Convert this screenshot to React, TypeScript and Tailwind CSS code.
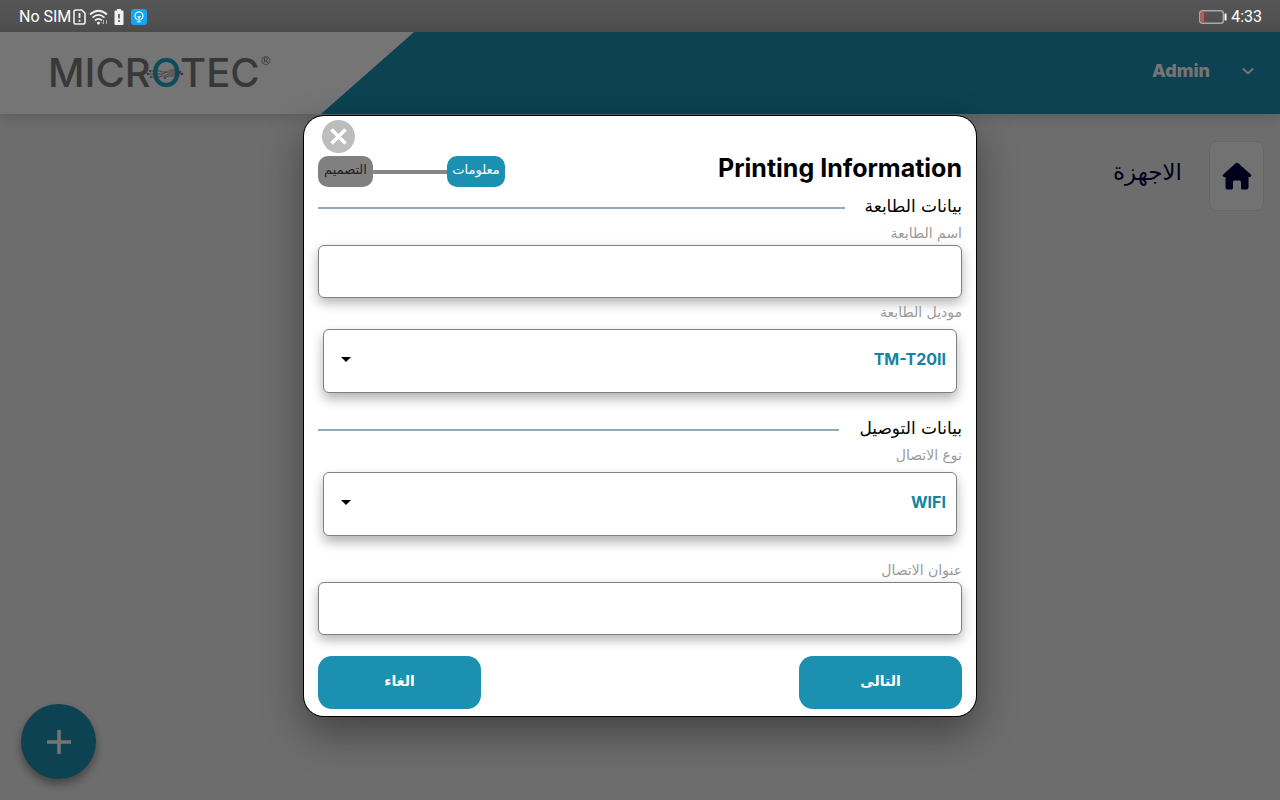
import React, { useState } from 'react';

const AdminMenu = () => (
  <button type="button" className="flex items-center gap-8 text-white">
    <span className="font-['Inter',sans-serif] text-lg font-extrabold">Admin</span>
    <svg width="12" height="8" viewBox="0 0 12 8" fill="none" stroke="currentColor" strokeWidth="1.800">
      <path d="M1 1.500l5 5 5-5" />
    </svg>
  </button>
);

const HomeIcon = () => (
  <svg width="30" height="28" viewBox="0 0 30 28" fill="currentColor">
    <path d="M13.700 1.200Q15 0.200 16.300 1.200L28.900 12.400Q30.200 14.600 27.800 15H26.500V25.500Q26.500 27.500 24.500 27.500H20.500Q19 27.500 19 26V20Q19 18.500 17.500 18.500H12.500Q11 18.500 11 20V26Q11 27.500 9.500 27.500H5.500Q3.500 27.500 3.500 25.500V15H2.200Q-0.200 14.600 1.100 12.400z" />
  </svg>
);

const StatusBar = () => (
  <div className="flex h-8 items-center justify-between bg-linear-to-b from-[#565656] to-[#4e4e4e] pt-0.5 pr-[18px] pl-[19px] font-['Roboto',sans-serif] text-base text-white">
    <div className="flex items-center">
      <span>No SIM</span>
      {/* Carte SIM absente */}
      <svg className="ml-[2px]" width="14" height="16" viewBox="0 0 14 16" fill="none" stroke="#f0f0f0">
        <path d="M2.500 1h6.200L12 4.300V13.500Q12 15 10.500 15h-8Q1 15 1 13.500V2.500Q1 1 2.500 1z" strokeWidth="1.600" />
        <path d="M6.500 4v5M6.500 10.700v2" strokeWidth="1.800" />
      </svg>
      <svg className="ml-[2px]" width="20" height="16" viewBox="0 0 20 16" fill="none" stroke="#f0f0f0" strokeWidth="1.700">
        <path d="M1 5.500Q9.500-2 18 5.500M3.500 8.600Q9.500 3.300 15.500 8.600M6 11.500Q9.500 8.400 13 11.500" />
        <circle cx="9.500" cy="14" r="1.500" fill="#f0f0f0" stroke="none" />
        <path d="M14.500 11v4M13 13.500l1.500 1.500M17.500 15v-4" stroke="#bbb" strokeWidth="0.900" />
      </svg>
      <svg className="ml-[5px]" width="10" height="16" viewBox="0 0 10 16">
        <path d="M3 0h4v1.500h1.500q1 0 1 1V15q0 1-1 1h-7q-1 0-1-1V2.500q0-1 1-1H3z" fill="#f0f0f0" />
        <path d="M5 5v4.500M5 11v2" stroke="#505050" strokeWidth="1.600" />
      </svg>
      <svg className="ml-[7px]" width="16" height="16" viewBox="0 0 16 16" fill="none">
        <rect width="16" height="16" rx="3" fill="#12a5f4" />
        <path d="M6 11V10.300A4 4 0 1 1 10 10.300V11" stroke="#fff" strokeWidth="1.100" />
        <path d="M8 7v5M6.300 7.200L8 9l1.700-1.800M6 12.800h4" stroke="#fff" />
      </svg>
    </div>
    <div className="flex items-center gap-1">
      <svg width="28" height="14" viewBox="0 0 28 14">
        <rect x="0.700" y="0.700" width="23.600" height="12.600" rx="2.500" fill="none" stroke="#a8a8a8" strokeWidth="1.400" />
        <rect x="2" y="2" width="3" height="10" fill="#f44336" />
        <rect x="25.500" y="3.500" width="2" height="7" rx="0.500" fill="#fff" />
      </svg>
      <span>4:33</span>
    </div>
  </div>
);

const Logo = () => (
  <div className="flex items-start text-[#7a7a7a]">
    <div className="relative font-['Inter',sans-serif] text-[40px] leading-[48px] font-medium">
      MICR<span className="text-[#1ba6cc]">O</span>TEC
      <svg className="absolute top-[17px] left-[97px]" width="40" height="16" viewBox="0 0 40 16" fill="none" stroke="#7a7a7a" strokeWidth="0.800">
        <path d="M3 8h15l3-2h14M5 5h10l2 1h5M6 11h8l3-1h4l2-2h14M20 12l3-2h10M24 4h9" />
        <g fill="#7a7a7a" stroke="none">
          <circle cx="3" cy="8" r="1.300" />
          <circle cx="5" cy="5" r="1.100" />
          <circle cx="6" cy="11" r="1.100" />
          <circle cx="35" cy="6" r="1.200" />
          <circle cx="37" cy="8" r="1.300" />
          <circle cx="33" cy="10" r="1.200" />
          <circle cx="20" cy="12" r="1.100" />
        </g>
      </svg>
    </div>
    <span className="mt-1 text-xs leading-4">®</span>
  </div>
);

type SectionProps = { title: string };

const SectionTitle = ({ title }: SectionProps) => (
  <div className="flex h-7 items-center gap-5">
    <h3 className="pb-1 text-[17px] leading-6 text-black">{title}</h3>
    <div className="h-[2px] flex-1 bg-[#8dabbd]" />
  </div>
);

type FieldProps = { id: string; label: string };

const TextField = ({ id, label }: FieldProps) => {
  const [value, setValue] = useState('');

  return (
    <div>
      <label htmlFor={id} className="block text-sm leading-[23px] text-[#9a9a9a]">{label}</label>
      <input
        id={id}
        type="text"
        value={value}
        onChange={(e) => setValue(e.target.value)}
        className="block h-[53px] w-full rounded-md border border-[#808080] bg-white px-3 shadow-[0_5px_12px_rgba(0,0,0,0.3)] outline-none"
      />
    </div>
  );
};

const SelectField = ({ id, label, options }: FieldProps & { options: string[] }) => (
  <div>
    <label htmlFor={id} className="block text-sm leading-[23px] text-[#9a9a9a]">{label}</label>
    <div className="relative mx-[5px] mt-[5px]">
      <select
        id={id}
        className="block h-16 w-full appearance-none rounded-md border border-[#808080] bg-white pr-[10px] pb-1 pl-10 font-['Inter',sans-serif] text-base font-bold text-[#1583a3] shadow-[0_6px_12px_rgba(0,0,0,0.3)] outline-none"
      >
        {options.map((option) => (
          <option key={option}>{option}</option>
        ))}
      </select>
      <svg className="pointer-events-none absolute top-7 left-[18px]" width="10" height="5" viewBox="0 0 10 5">
        <path d="M0 0h10L5 5z" />
      </svg>
    </div>
  </div>
);

const PrintingDialog = ({ onClose }: { onClose: () => void }) => (
  <div
    role="dialog"
    aria-labelledby="dialog-title"
    className="w-full max-w-2xl rounded-[20px] bg-white px-[14px] pt-1 pb-[7px] shadow-[0_16px_40px_rgba(0,0,0,0.4)] ring-1 ring-black"
  >
    <div className="flex justify-end px-1">
      <button type="button" aria-label="اغلاق" onClick={onClose} className="flex size-[33px] items-center justify-center rounded-full bg-[#bdbdbd]">
        <svg width="17" height="17" viewBox="0 0 17 17" stroke="#fff" strokeWidth="3.500">
          <path d="M1.500 1.500l14 14M15.500 1.500l-14 14" />
        </svg>
      </button>
    </div>

    <div className="mt-[3px] flex items-start justify-between">
      <h2 id="dialog-title" className="pb-2 font-['Inter',sans-serif] text-[25px] leading-6 font-bold text-black">Printing Information</h2>
      {/* Étapes du formulaire */}
      <div className="flex w-[187px] items-center">
        <button type="button" className="h-[31px] w-[58px] rounded-[10px] bg-[#1b90b1] pb-1 text-[13px] leading-5 whitespace-nowrap text-white">معلومات</button>
        <div className="h-1 flex-1 bg-[#868686]" />
        <button type="button" className="h-[31px] w-[55px] rounded-[10px] bg-[#808080] pb-1 text-[13px] leading-5 whitespace-nowrap text-[#222]">التصميم</button>
      </div>
    </div>

    <form onSubmit={(e) => e.preventDefault()}>
      <div className="mt-[6px]">
        <SectionTitle title="بيانات الطابعة" />
        <TextField id="printer-name" label="اسم الطابعة" />
        <div className="mt-[3px]">
          <SelectField id="printer-model" label="موديل الطابعة" options={['TM-T20II']} />
        </div>
      </div>

      <div className="mt-[23px]">
        <SectionTitle title="بيانات التوصيل" />
        <SelectField id="connection-type" label="نوع الاتصال" options={['WIFI']} />
        <div className="mt-[23px]">
          <TextField id="connection-address" label="عنوان الاتصال" />
        </div>
      </div>

      <div className="mt-[21px] flex justify-between">
        <button type="submit" className="h-[53px] w-[163px] rounded-[14px] bg-[#1b90b1] pb-1 text-sm font-bold text-white">التالى</button>
        <button type="button" onClick={onClose} className="h-[53px] w-[163px] rounded-[14px] bg-[#1b90b1] pb-1 text-sm font-bold text-white">الغاء</button>
      </div>
    </form>
  </div>
);

const App = () => {
  const [isModalOpen, setIsModalOpen] = useState(true);

  return (
    <div className="flex min-h-screen flex-col font-['DejaVu_Sans',sans-serif]">
      <StatusBar />
      <div dir="rtl" className="relative flex flex-1 flex-col bg-[#eeeeee]">
        <header className="flex h-[82px] items-center justify-between bg-[#1b90b1] pr-[26px] shadow-[0_4px_12px_rgba(0,0,0,0.15)]">
          <div dir="ltr" className="pb-1"><AdminMenu /></div>
          <div dir="ltr" className="flex h-full w-[414px] items-center bg-white pl-12 [clip-path:polygon(0_0,100%_0,321px_100%,0_100%)]">
            <Logo />
          </div>
        </header>

        <main className="flex items-center gap-[27px] px-4 pt-[27px]">
          <a href="#" aria-label="الرئيسية" className="flex h-[70px] w-[55px] items-center justify-center rounded-lg border border-[#dcdcf0] bg-[#f8f8f8] text-[#000040]">
            <HomeIcon />
          </a>
          <h1 className="pb-2 text-[23px] text-[#000040]">الاجهزة</h1>
        </main>

        <button
          type="button"
          aria-label="اضافة"
          onClick={() => setIsModalOpen(true)}
          className="absolute bottom-[21px] left-[21px] flex size-[75px] items-center justify-center rounded-full bg-[#1b90b1] shadow-[0_5px_10px_rgba(0,0,0,0.4)]"
        >
          <svg width="24" height="24" viewBox="0 0 24 24" stroke="#fff" strokeWidth="3.500">
            <path d="M12 0v24M0 12h24" />
          </svg>
        </button>

        {/* Fond sombre et modal */}
        {isModalOpen && (
          <div className="absolute inset-0 flex items-center justify-center bg-black/54">
            <PrintingDialog onClose={() => setIsModalOpen(false)} />
          </div>
        )}
      </div>
    </div>
  );
};

export default App;
